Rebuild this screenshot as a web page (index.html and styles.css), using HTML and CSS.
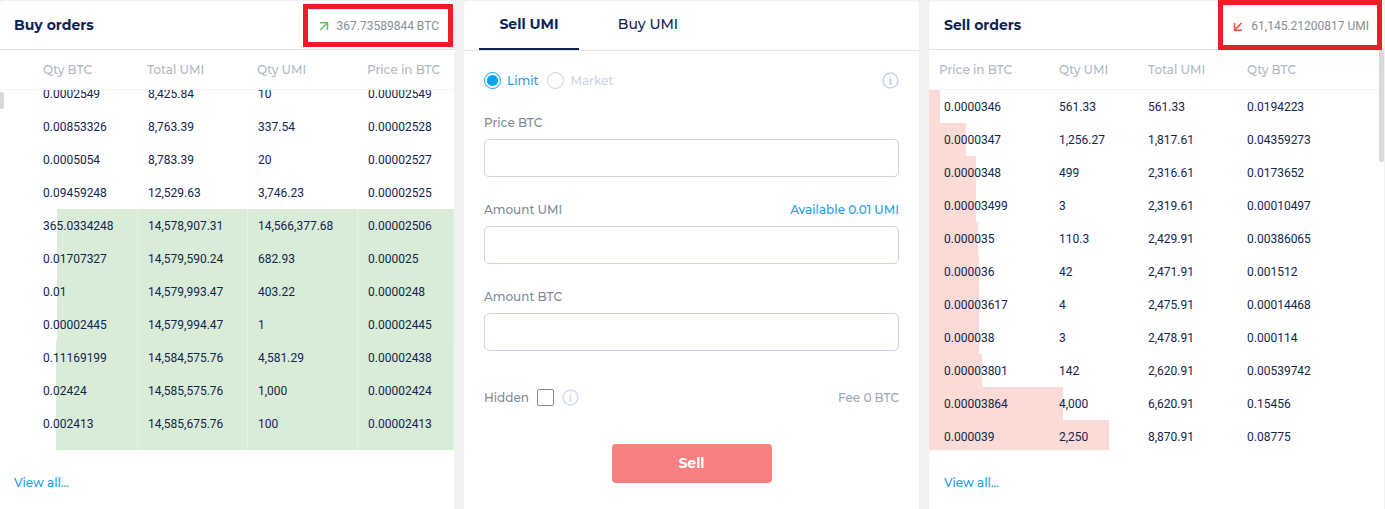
FILE: index.html
```html
<!DOCTYPE html>
<html lang="en">
<head>
<meta charset="utf-8">
<meta name="viewport" content="width=device-width, initial-scale=1">
<title>UMI / BTC orders</title>
<link rel="stylesheet" href="styles.css">
</head>
<body>
<main class="exchange">
  <section class="panel orders orders-buy">
    <header class="panel-head">
      <h2 class="panel-title">Buy orders</h2>
      <p class="total total-buy">
        <svg class="arrow" viewBox="0 0 10 10" aria-hidden="true"><path d="M1 1.7H8.5V9M8.2 2L1 9" fill="none" stroke="#5cc45f" stroke-width="1.5"/></svg>
        367.73589844 BTC
      </p>
    </header>
    <table class="book">
      <thead><tr><th>Qty BTC</th><th>Total UMI</th><th>Qty UMI</th><th>Price in BTC</th></tr></thead>
      <tbody>
        <tr><td>0.0002549</td><td>8,425.84</td><td>10</td><td>0.00002549</td></tr>
        <tr><td>0.00853326</td><td>8,763.39</td><td>337.54</td><td>0.00002528</td></tr>
        <tr><td>0.0005054</td><td>8,783.39</td><td>20</td><td>0.00002527</td></tr>
        <tr><td>0.09459248</td><td>12,529.63</td><td>3,746.23</td><td>0.00002525</td></tr>
        <tr style="--depth:87.4%"><td>365.0334248</td><td>14,578,907.31</td><td>14,566,377.68</td><td>0.00002506</td></tr>
        <tr style="--depth:87.4%"><td>0.01707327</td><td>14,579,590.24</td><td>682.93</td><td>0.000025</td></tr>
        <tr style="--depth:87.4%"><td>0.01</td><td>14,579,993.47</td><td>403.22</td><td>0.0000248</td></tr>
        <tr style="--depth:87.4%"><td>0.00002445</td><td>14,579,994.47</td><td>1</td><td>0.00002445</td></tr>
        <tr style="--depth:87.6%"><td>0.11169199</td><td>14,584,575.76</td><td>4,581.29</td><td>0.00002438</td></tr>
        <tr style="--depth:87.6%"><td>0.02424</td><td>14,585,575.76</td><td>1,000</td><td>0.00002424</td></tr>
        <tr style="--depth:87.6%"><td>0.002413</td><td>14,585,675.76</td><td>100</td><td>0.00002413</td></tr>
        <tr style="--depth:87.6%"><td></td><td></td><td></td><td></td></tr>
      </tbody>
    </table>
    <footer class="panel-foot"><a class="link" href="#buy-orders">View all...</a></footer>
    <span class="thumb"></span>
  </section>

  <section class="panel trade">
    <nav class="tabs">
      <button class="tab tab-active" type="button">Sell UMI</button>
      <button class="tab" type="button">Buy UMI</button>
    </nav>
    <form class="form">
      <div class="row row-type">
        <label class="choice choice-on"><input class="radio" type="radio" name="type" checked>Limit</label>
        <label class="choice"><input class="radio" type="radio" name="type">Market</label>
        <svg class="info push" viewBox="0 0 17 17" aria-hidden="true"><circle cx="8.5" cy="8.5" r="7.4" fill="none" stroke="#cdd4e0" stroke-width="1.7"/><path d="M8.5 4.2V5.8M7 7.6H8.5V12M7 12H10" fill="none" stroke="#cdd4e0" stroke-width="1.6"/></svg>
      </div>
      <div class="field">
        <div class="row"><label for="price">Price BTC</label></div>
        <input class="box" id="price" type="text">
      </div>
      <div class="field">
        <div class="row"><label for="amount-umi">Amount UMI</label><a class="link push" href="#available">Available 0.01 UMI</a></div>
        <input class="box" id="amount-umi" type="text">
      </div>
      <div class="field">
        <div class="row"><label for="amount-btc">Amount BTC</label></div>
        <input class="box" id="amount-btc" type="text">
      </div>
      <div class="row row-hidden">
        <label for="hidden">Hidden</label>
        <input class="check" id="hidden" type="checkbox">
        <svg class="info" viewBox="0 0 17 17" aria-hidden="true"><circle cx="8.5" cy="8.5" r="7.4" fill="none" stroke="#d8dee7" stroke-width="1.7"/><path d="M8.5 4.2V5.8M7 7.6H8.5V12M7 12H10" fill="none" stroke="#d8dee7" stroke-width="1.6"/></svg>
        <span class="fee push">Fee 0 BTC</span>
      </div>
      <button class="submit" type="button">Sell</button>
    </form>
  </section>

  <section class="panel orders orders-sell">
    <header class="panel-head">
      <h2 class="panel-title">Sell orders</h2>
      <p class="total total-sell">
        <svg class="arrow" viewBox="0 0 10 10" aria-hidden="true"><path d="M1.5 2V9.2H9M1.8 8.9L8.6 2" fill="none" stroke="#f4503c" stroke-width="1.5"/></svg>
        61,145.21200817 UMI
      </p>
    </header>
    <table class="book">
      <thead><tr><th>Price in BTC</th><th>Qty UMI</th><th>Total UMI</th><th>Qty BTC</th></tr></thead>
      <tbody>
        <tr style="--depth:2.4%"><td>0.0000346</td><td>561.33</td><td>561.33</td><td>0.0194223</td></tr>
        <tr style="--depth:8.1%"><td>0.0000347</td><td>1,256.27</td><td>1,817.61</td><td>0.04359273</td></tr>
        <tr style="--depth:10.3%"><td>0.0000348</td><td>499</td><td>2,316.61</td><td>0.0173652</td></tr>
        <tr style="--depth:10.3%"><td>0.00003499</td><td>3</td><td>2,319.61</td><td>0.00010497</td></tr>
        <tr style="--depth:10.8%"><td>0.000035</td><td>110.3</td><td>2,429.91</td><td>0.00386065</td></tr>
        <tr style="--depth:11%"><td>0.000036</td><td>42</td><td>2,471.91</td><td>0.001512</td></tr>
        <tr style="--depth:11%"><td>0.00003617</td><td>4</td><td>2,475.91</td><td>0.00014468</td></tr>
        <tr style="--depth:11%"><td>0.000038</td><td>3</td><td>2,478.91</td><td>0.000114</td></tr>
        <tr style="--depth:11.7%"><td>0.00003801</td><td>142</td><td>2,620.91</td><td>0.00539742</td></tr>
        <tr style="--depth:29.5%"><td>0.00003864</td><td>4,000</td><td>6,620.91</td><td>0.15456</td></tr>
        <tr style="--depth:39.6%"><td>0.000039</td><td>2,250</td><td>8,870.91</td><td>0.08775</td></tr>
      </tbody>
    </table>
    <footer class="panel-foot"><a class="link" href="#sell-orders">View all...</a></footer>
    <span class="thumb"></span>
  </section>
</main>
</body>
</html>
```
FILE: styles.css
```css
*, *::after { box-sizing: border-box; }

body {
  margin: 0;
  background: #f1f1f1;
  color: #808a96;
  font: 500 12px/17px Montserrat, Inter, sans-serif;
}

button, input { font: inherit; margin: 0; }

.exchange {
  display: grid;
  grid-template-columns: 454fr 455fr 455fr;
  gap: 10px;
  padding: 1px 1px 1px 0;
}

.panel {
  position: relative;
  background: #fff;
  border-radius: 4px;
}

.panel-head {
  position: relative;
  display: flex;
  align-items: center;
  justify-content: space-between;
  height: 49px;
  padding: 0 15px 0 14px;
  border-bottom: 1px solid #e1e3e6;
}

.orders-sell .panel-head { padding-left: 15px; }

.panel-title {
  margin: 0;
  color: #0e2352;
  font-size: 14px;
  font-weight: 700;
}

.total {
  display: flex;
  align-items: center;
  gap: 8px;
  margin: 0;
  padding-top: 2px;
  color: #868e98;
  font: 12px/17px Roboto, sans-serif;
}

.arrow { width: 10px; height: 10px; }

/* Highlight frames around the totals */
.total::after {
  content: "";
  position: absolute;
  z-index: 1;
  border: 5px solid #ee1c24;
}

.total-buy::after { top: 3px; right: 1px; width: 150px; height: 43px; }
.total-sell::after { top: -1px; right: 2px; width: 164px; height: 50px; }

.book { display: block; text-align: left; }
.book thead, .book tbody { display: block; }

.book thead {
  height: 40px;
  border-bottom: 1px solid #f6f6f7;
  color: #b0b8c4;
}

.book tbody {
  height: 360px;
  overflow: hidden;
  color: #13254f;
  font: 12px/33px Roboto, sans-serif;
}

.book tr { display: grid; }
.orders-buy tr { grid-template-columns: 137fr 110fr 110fr 97fr; }
.orders-sell tr { grid-template-columns: 120fr 89fr 99fr 147fr; }

.book th {
  padding: 0 0 0 10px;
  font-weight: 500;
  line-height: 39px;
  white-space: nowrap;
}

.book td { height: 33px; padding: 1px 0 0 10px; }

.orders-buy th:first-child, .orders-buy td:first-child { padding-left: 43px; }
.orders-sell td:first-child { padding-left: 15px; }

.orders-buy td + td { border-left: 1px solid rgba(255, 255, 255, 0.3); }

/* Depth bars grow from the price side of each book */
.orders-buy tbody tr {
  background: linear-gradient(#d8ecd8, #d8ecd8) right / var(--depth, 0) 100% no-repeat;
}

.orders-sell tbody tr {
  background: linear-gradient(#fcdad5, #fcdad5) left / var(--depth, 0) 100% no-repeat;
}

/* The buy list rests part-way through its first row */
.orders-buy tbody tr:first-child { margin-top: -13px; }

.panel-foot { padding: 24px 14px; }
.orders-sell .panel-foot { padding-left: 15px; }

.thumb {
  position: absolute;
  background: #d9d9d9;
}

.orders-buy .thumb {
  top: 91px;
  left: 0;
  width: 4px;
  height: 17px;
  border-radius: 0 2px 2px 0;
}

.orders-sell .thumb {
  top: 49px;
  right: 0;
  width: 5px;
  height: 112px;
  border-radius: 3px;
}

.link { color: #1ba0e6; text-decoration: none; }

.tabs {
  display: flex;
  gap: 19px;
  height: 50px;
  padding: 0 15px;
  border-bottom: 1px solid #e1e3e6;
}

.tab {
  min-width: 100px;
  padding: 0;
  border: 0;
  border-bottom: 2px solid transparent;
  background: none;
  color: #0e2352;
  font-size: 14px;
}

.tab-active { border-bottom-color: #0e2352; font-weight: 700; }

.form {
  display: flex;
  flex-direction: column;
  padding: 21px 20px 24px;
}

.row { display: flex; align-items: center; }
.push { margin-left: auto; }

.row-type { gap: 9px; margin-bottom: 25px; }

.choice {
  display: flex;
  align-items: center;
  gap: 6px;
  color: #cdd4df;
}

.choice-on { color: #1ba0e6; }

.radio {
  appearance: none;
  width: 17px;
  height: 17px;
  border: 1px solid #cdd4df;
  border-radius: 50%;
}

.radio:checked {
  border-color: #06a4e8;
  background: radial-gradient(circle, #06a4e8 5px, transparent 6px);
}

.info { width: 17px; height: 17px; }

.field {
  display: grid;
  gap: 8px;
  margin-bottom: 24px;
}

.box {
  width: 100%;
  height: 38px;
  padding: 0 12px;
  border: 1px solid #cdd2e0;
  border-radius: 5px;
  background: #fff;
}

.row-hidden { gap: 8px; margin-top: 14px; }

.check {
  appearance: none;
  width: 17px;
  height: 17px;
  border: 1px solid #808a96;
  border-radius: 2px;
}

.fee { color: #a0a8b3; }

.submit {
  align-self: center;
  width: 160px;
  height: 39px;
  margin-top: 38px;
  border: 0;
  border-radius: 4px;
  background: #f88080;
  color: #fff;
  font-size: 14px;
  font-weight: 700;
}
```
